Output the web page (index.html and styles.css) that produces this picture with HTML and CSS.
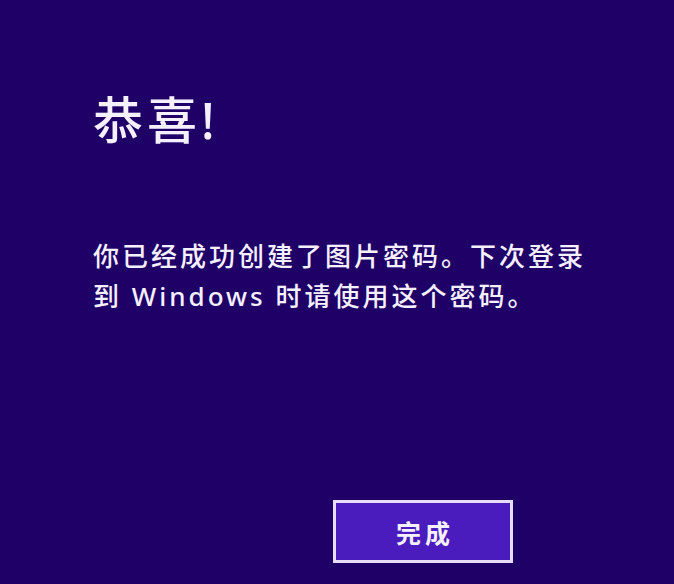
FILE: index.html
```html
<!DOCTYPE html>
<html lang="zh-CN">
<head>
<meta charset="utf-8">
<link rel="stylesheet" href="styles.css">
</head>
<body>
<div class="page">
  <h1 class="title">恭喜!</h1>
  <p class="message">你已经成功创建了图片密码。下次登录<br>到 Windows 时请使用这个密码。</p>
  <div class="actions">
    <button class="done">完成</button>
  </div>
</div>
</body>
</html>
```
FILE: styles.css
```css
html, body {
  margin: 0;
  padding: 0;
  background: #1f0066;
}
.page {
  width: 674px;
  height: 584px;
  box-sizing: border-box;
  padding: 90px 0 0 93px;
  display: flex;
  flex-direction: column;
  font-family: "Noto Sans", "Noto Sans CJK SC", sans-serif;
  color: #f4f0ff;
}
.title {
  margin: 0;
  font-size: 50px;
  font-weight: 500;
  line-height: 60px;
  letter-spacing: 4px;
}
.message {
  margin: 86px 0 0 0;
  font-size: 26px;
  font-weight: 500;
  line-height: 40px;
  letter-spacing: 3px;
}
.actions {
  display: flex;
  padding-left: 240px;
  margin-top: 184px;
}
.done {
  width: 180px;
  height: 63px;
  box-sizing: border-box;
  border: 3px solid #e6defc;
  background: #4a1cbd;
  color: #f4f0ff;
  font-family: "Noto Sans CJK SC", sans-serif;
  font-size: 25px;
  font-weight: 700;
  letter-spacing: 4px;
  padding: 0 0 0 4px;
}
```
